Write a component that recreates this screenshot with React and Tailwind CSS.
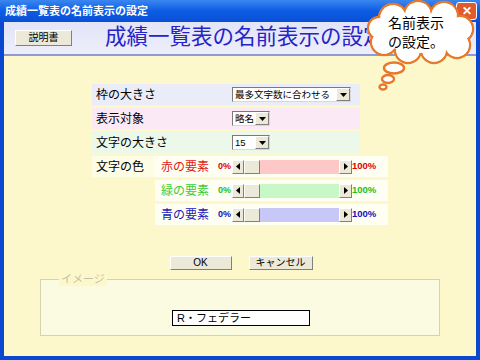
const font = "font-['Liberation_Sans','Noto_Sans_CJK_JP',sans-serif]"

function Tri({ dir }) {
  if (dir === 'down')
    return (
      <svg width="7" height="4" viewBox="0 0 7 4"><path d="M0 0h7L3.5 4z" fill="#000" /></svg>
    )
  if (dir === 'left')
    return (
      <svg width="4" height="7" viewBox="0 0 4 7"><path d="M4 0v7L0 3.5z" fill="#000" /></svg>
    )
  return (
    <svg width="4" height="7" viewBox="0 0 4 7"><path d="M0 0v7L4 3.5z" fill="#000" /></svg>
  )
}

function Select({ value, w }) {
  return (
    <div className={`flex h-[15px] items-stretch bg-white border border-[#7a7a7a] border-r-[#d8d8d8] border-b-[#d8d8d8] ${w}`}>
      <span className="flex-1 pl-[2px] text-[9.5px] leading-[13px] text-black whitespace-nowrap overflow-hidden">{value}</span>
      <span className="w-[14px] flex items-center justify-center bg-[#ece9d8] border-l border-t border-white border-r border-r-[#808080] border-b border-b-[#808080]">
        <Tri dir="down" />
      </span>
    </div>
  )
}

const colorRows = [
  { label: '赤の要素', text: 'text-[#e01818]', pct: 'text-[#e00000]', track: 'bg-[#ffc8c8]' },
  { label: '緑の要素', text: 'text-[#3ccc3c]', pct: 'text-[#18c018]', track: 'bg-[#c8f8c8]' },
  { label: '青の要素', text: 'text-[#2020b8]', pct: 'text-[#1010c0]', track: 'bg-[#c8c8f8]' },
]

function ScrollBar({ track }) {
  return (
    <div className="flex h-[14px] w-[120px]">
      <span className="w-[12px] flex items-center justify-center bg-[#ece9d8] border border-t-white border-l-white border-r-[#808080] border-b-[#808080]">
        <Tri dir="left" />
      </span>
      <span className="w-[16px] bg-[#ece9d8] border border-t-white border-l-white border-r-[#808080] border-b-[#808080]" />
      <span className={`flex-1 ${track}`} />
      <span className="w-[13px] flex items-center justify-center bg-[#ece9d8] border border-t-white border-l-white border-r-[#808080] border-b-[#808080]">
        <Tri dir="right" />
      </span>
    </div>
  )
}

function Bubble() {
  const bumps = [
    [33, 18, 14], [58, 15, 14], [84, 16, 14], [100, 29, 13], [97, 45, 13],
    [74, 50, 13], [48, 50, 13], [24, 42, 13], [19, 28, 11],
  ]
  return (
    <div className="absolute left-[360px] top-0 w-[120px] h-[92px]">
      <svg width="120" height="92" viewBox="0 0 120 92" className="absolute inset-0">
        <g fill="#fff" stroke="#e8782a" strokeWidth="2.4">
          {bumps.map(([x, y, r], i) => <circle key={i} cx={x} cy={y} r={r} />)}
          <ellipse cx="34" cy="68" rx="10" ry="5.5" />
          <ellipse cx="28" cy="79" rx="6" ry="4" />
          <ellipse cx="23" cy="87" rx="3.5" ry="2.5" />
        </g>
        <g fill="#fff">
          {bumps.map(([x, y, r], i) => <circle key={i} cx={x} cy={y} r={r - 1.2} />)}
          <ellipse cx="60" cy="33" rx="40" ry="20" />
        </g>
      </svg>
      <div className={`absolute left-[28px] top-[14px] text-[14px] leading-[19px] text-black ${font}`}>
        名前表示<br />の設定。
      </div>
    </div>
  )
}

export default function App() {
  return (
    <div className={`relative w-[480px] h-[360px] flex flex-col bg-[#0a48d0] ${font}`}>
      {/* title bar */}
      <div className="h-[22px] flex items-center pl-[5px] bg-gradient-to-b from-[#3a86f0] via-[#0c5ce4] to-[#0a4fd6]">
        <span className="text-[11px] font-bold text-white">成績一覧表の名前表示の設定</span>
        <span className="ml-auto mr-[3px] w-[21px] h-[18px] rounded-[3px] bg-[#e05a30] border border-white flex items-center justify-center text-white text-[12px] font-bold">✕</span>
      </div>

      <div className="flex-1 flex flex-col mx-[4px] mb-[4px] bg-[#fcf8cc]">
        {/* header */}
        <div className="h-[34px] flex items-center bg-gradient-to-b from-[#e2e4f8] to-[#eeeefa] border-b-2 border-[#8d9ad8]">
          <button className="ml-[11px] w-[57px] h-[16px] bg-[#ece9d8] border border-t-white border-l-white border-r-[#808080] border-b-[#808080] text-[10px] leading-[14px] text-black">
            説明書
          </button>
          <span className="ml-[33px] text-[21.5px] leading-none text-[#2424c8]">成績一覧表の名前表示の設定</span>
        </div>

        {/* settings rows */}
        <div className="ml-[88px] mt-[28px] flex flex-col gap-[3px]">
          <div className="w-[268px] h-[21px] flex items-center bg-[#eaecf8]">
            <span className="w-[140px] pl-[4px] text-[12px] text-black">枠の大きさ</span>
            <Select value="最多文字数に合わせる" w="w-[119px]" />
          </div>
          <div className="w-[268px] h-[21px] flex items-center bg-[#fbe9f6]">
            <span className="w-[140px] pl-[4px] text-[12px] text-black">表示対象</span>
            <Select value="略名" w="w-[38px]" />
          </div>
          <div className="w-[268px] h-[21px] flex items-center bg-[#ecf8e9]">
            <span className="w-[140px] pl-[4px] text-[12px] text-black">文字の大きさ</span>
            <Select value="15" w="w-[38px]" />
          </div>
          <div className="flex items-start">
            <div className="w-[63px] h-[21px] flex items-center pl-[4px] bg-[#fdfde6] text-[12px] text-black">文字の色</div>
            <div className="flex flex-col gap-[3px]">
              {colorRows.map((r) => (
                <div key={r.label} className="w-[233px] h-[21px] flex items-center bg-[#fefef2]">
                  <span className={`w-[63px] pl-[6px] text-[12px] ${r.text}`}>{r.label}</span>
                  <span className={`w-[14px] text-[9px] font-bold ${r.pct}`}>0%</span>
                  <ScrollBar track={r.track} />
                  <span className={`text-[9.5px] font-bold ${r.pct}`}>100%</span>
                </div>
              ))}
            </div>
          </div>
        </div>

        {/* buttons */}
        <div className="mt-[31px] flex justify-center gap-[17px] pl-[2px]">
          <button className="w-[62px] h-[14px] bg-[#ece9d8] border border-t-white border-l-white border-r-[#808080] border-b-[#808080] text-[10px] leading-[12px] text-black">OK</button>
          <button className="w-[64px] h-[14px] bg-[#ece9d8] border border-t-white border-l-white border-r-[#808080] border-b-[#808080] text-[10px] leading-[12px] text-black">キャンセル</button>
        </div>

        {/* image group */}
        <div className="relative mx-[36px] mt-[9px] h-[57px] bg-[#fafbe0] border border-[#d6d4b0] flex justify-center">
          <span className="absolute left-[18px] -top-[8px] px-[2px] bg-[#fcf8cc] text-[11px] leading-[14px] text-[#c4c2a6]">イメージ</span>
          <div className="mt-[30px] ml-[2px] w-[138px] h-[16px] bg-white border border-black text-[11px] leading-[14px] pl-[4px] text-black">R・フェデラー</div>
        </div>
      </div>

      <Bubble />
    </div>
  )
}
